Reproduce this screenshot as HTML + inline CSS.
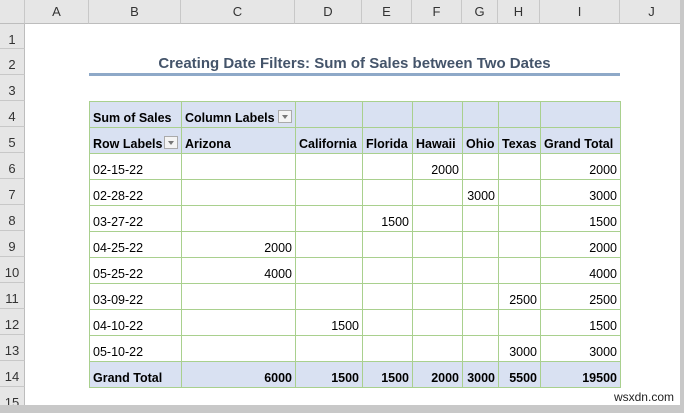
<!DOCTYPE html>
<html><head><meta charset="utf-8"><style>
*{margin:0;padding:0;box-sizing:border-box}
body{width:684px;height:413px;overflow:hidden;background:#fff;font-family:"Liberation Sans",Arial,sans-serif;position:relative}
.ch{position:absolute;top:0;height:24px;background:#e6e6e6;border-right:1px solid #c8c8c8;border-bottom:1px solid #bdbdbd;font-size:13px;color:#333;text-align:center;line-height:24px}
.rh{position:absolute;left:0;width:25px;background:#e6e6e6;border-bottom:1px solid #c8c8c8;border-right:1px solid #bdbdbd;font-size:13px;color:#333;text-align:center;line-height:26px;padding-top:3px}
table{position:absolute;left:89px;top:101px;border-collapse:collapse;font-size:12.5px;color:#000;table-layout:fixed;width:531px}
td{border:1px solid #a9d08e;height:26px;padding:6px 3px 0 3px;white-space:nowrap;overflow:hidden;vertical-align:middle}
td.n{text-align:right}
tr.h td{background:#d9e1f2;font-weight:bold}
.dd{display:inline-block;width:14px;height:13px;border:1px solid #aaa;background:#f4f4f4;vertical-align:middle;position:relative;margin-left:3px;margin-top:-3px}
.dd:after{content:"";position:absolute;left:3px;top:4px;border-left:3.5px solid transparent;border-right:3.5px solid transparent;border-top:4px solid #777}
</style></head><body>
<div class="ch" style="left:0;width:25px"></div>
<div class="ch" style="left:25px;width:64px">A</div>
<div class="ch" style="left:89px;width:92px">B</div>
<div class="ch" style="left:181px;width:114px">C</div>
<div class="ch" style="left:295px;width:67px">D</div>
<div class="ch" style="left:362px;width:50px">E</div>
<div class="ch" style="left:412px;width:50px">F</div>
<div class="ch" style="left:462px;width:36px">G</div>
<div class="ch" style="left:498px;width:42px">H</div>
<div class="ch" style="left:540px;width:80px">I</div>
<div class="ch" style="left:620px;width:64px">J</div>
<div class="rh" style="top:24px;height:25px">1</div>
<div class="rh" style="top:49px;height:26px">2</div>
<div class="rh" style="top:75px;height:26px">3</div>
<div class="rh" style="top:101px;height:26px">4</div>
<div class="rh" style="top:127px;height:26px">5</div>
<div class="rh" style="top:153px;height:26px">6</div>
<div class="rh" style="top:179px;height:26px">7</div>
<div class="rh" style="top:205px;height:26px">8</div>
<div class="rh" style="top:231px;height:26px">9</div>
<div class="rh" style="top:257px;height:26px">10</div>
<div class="rh" style="top:283px;height:26px">11</div>
<div class="rh" style="top:309px;height:26px">12</div>
<div class="rh" style="top:335px;height:26px">13</div>
<div class="rh" style="top:361px;height:26px">14</div>
<div class="rh" style="top:387px;height:26px">15</div>
<div style="position:absolute;left:89px;width:531px;top:55px;text-align:center;font-weight:bold;font-size:15px;color:#44546a">Creating Date Filters: Sum of Sales between Two Dates</div>
<div style="position:absolute;left:89px;width:531px;top:73px;height:3px;background:#8ea9c8"></div>
<table>
<colgroup><col style="width:92px"><col style="width:114px"><col style="width:67px"><col style="width:50px"><col style="width:50px"><col style="width:36px"><col style="width:42px"><col style="width:80px"></colgroup>
<tr class="h"><td>Sum of Sales</td><td>Column Labels<span class="dd"></span></td><td></td><td></td><td></td><td></td><td></td><td></td></tr>
<tr class="h"><td>Row Labels<span class="dd" style="margin-left:2px"></span></td><td>Arizona</td><td>California</td><td>Florida</td><td>Hawaii</td><td>Ohio</td><td>Texas</td><td>Grand Total</td></tr>
<tr><td>02-15-22</td><td></td><td></td><td></td><td class="n">2000</td><td></td><td></td><td class="n">2000</td></tr>
<tr><td>02-28-22</td><td></td><td></td><td></td><td></td><td class="n">3000</td><td></td><td class="n">3000</td></tr>
<tr><td>03-27-22</td><td></td><td></td><td class="n">1500</td><td></td><td></td><td></td><td class="n">1500</td></tr>
<tr><td>04-25-22</td><td class="n">2000</td><td></td><td></td><td></td><td></td><td></td><td class="n">2000</td></tr>
<tr><td>05-25-22</td><td class="n">4000</td><td></td><td></td><td></td><td></td><td></td><td class="n">4000</td></tr>
<tr><td>03-09-22</td><td></td><td></td><td></td><td></td><td></td><td class="n">2500</td><td class="n">2500</td></tr>
<tr><td>04-10-22</td><td></td><td class="n">1500</td><td></td><td></td><td></td><td></td><td class="n">1500</td></tr>
<tr><td>05-10-22</td><td></td><td></td><td></td><td></td><td></td><td class="n">3000</td><td class="n">3000</td></tr>
<tr class="h"><td>Grand Total</td><td class="n">6000</td><td class="n">1500</td><td class="n">1500</td><td class="n">2000</td><td class="n">3000</td><td class="n">5500</td><td class="n">19500</td></tr>
</table>
<div style="position:absolute;right:0;top:0;width:4px;height:413px;background:#c8c8c8"></div>
<div style="position:absolute;left:0;top:405px;width:684px;height:8px;background:#c8c8c8"></div>
<div style="position:absolute;right:10px;top:390px;font-size:12px;color:#222">wsxdn.com</div>
</body></html>
